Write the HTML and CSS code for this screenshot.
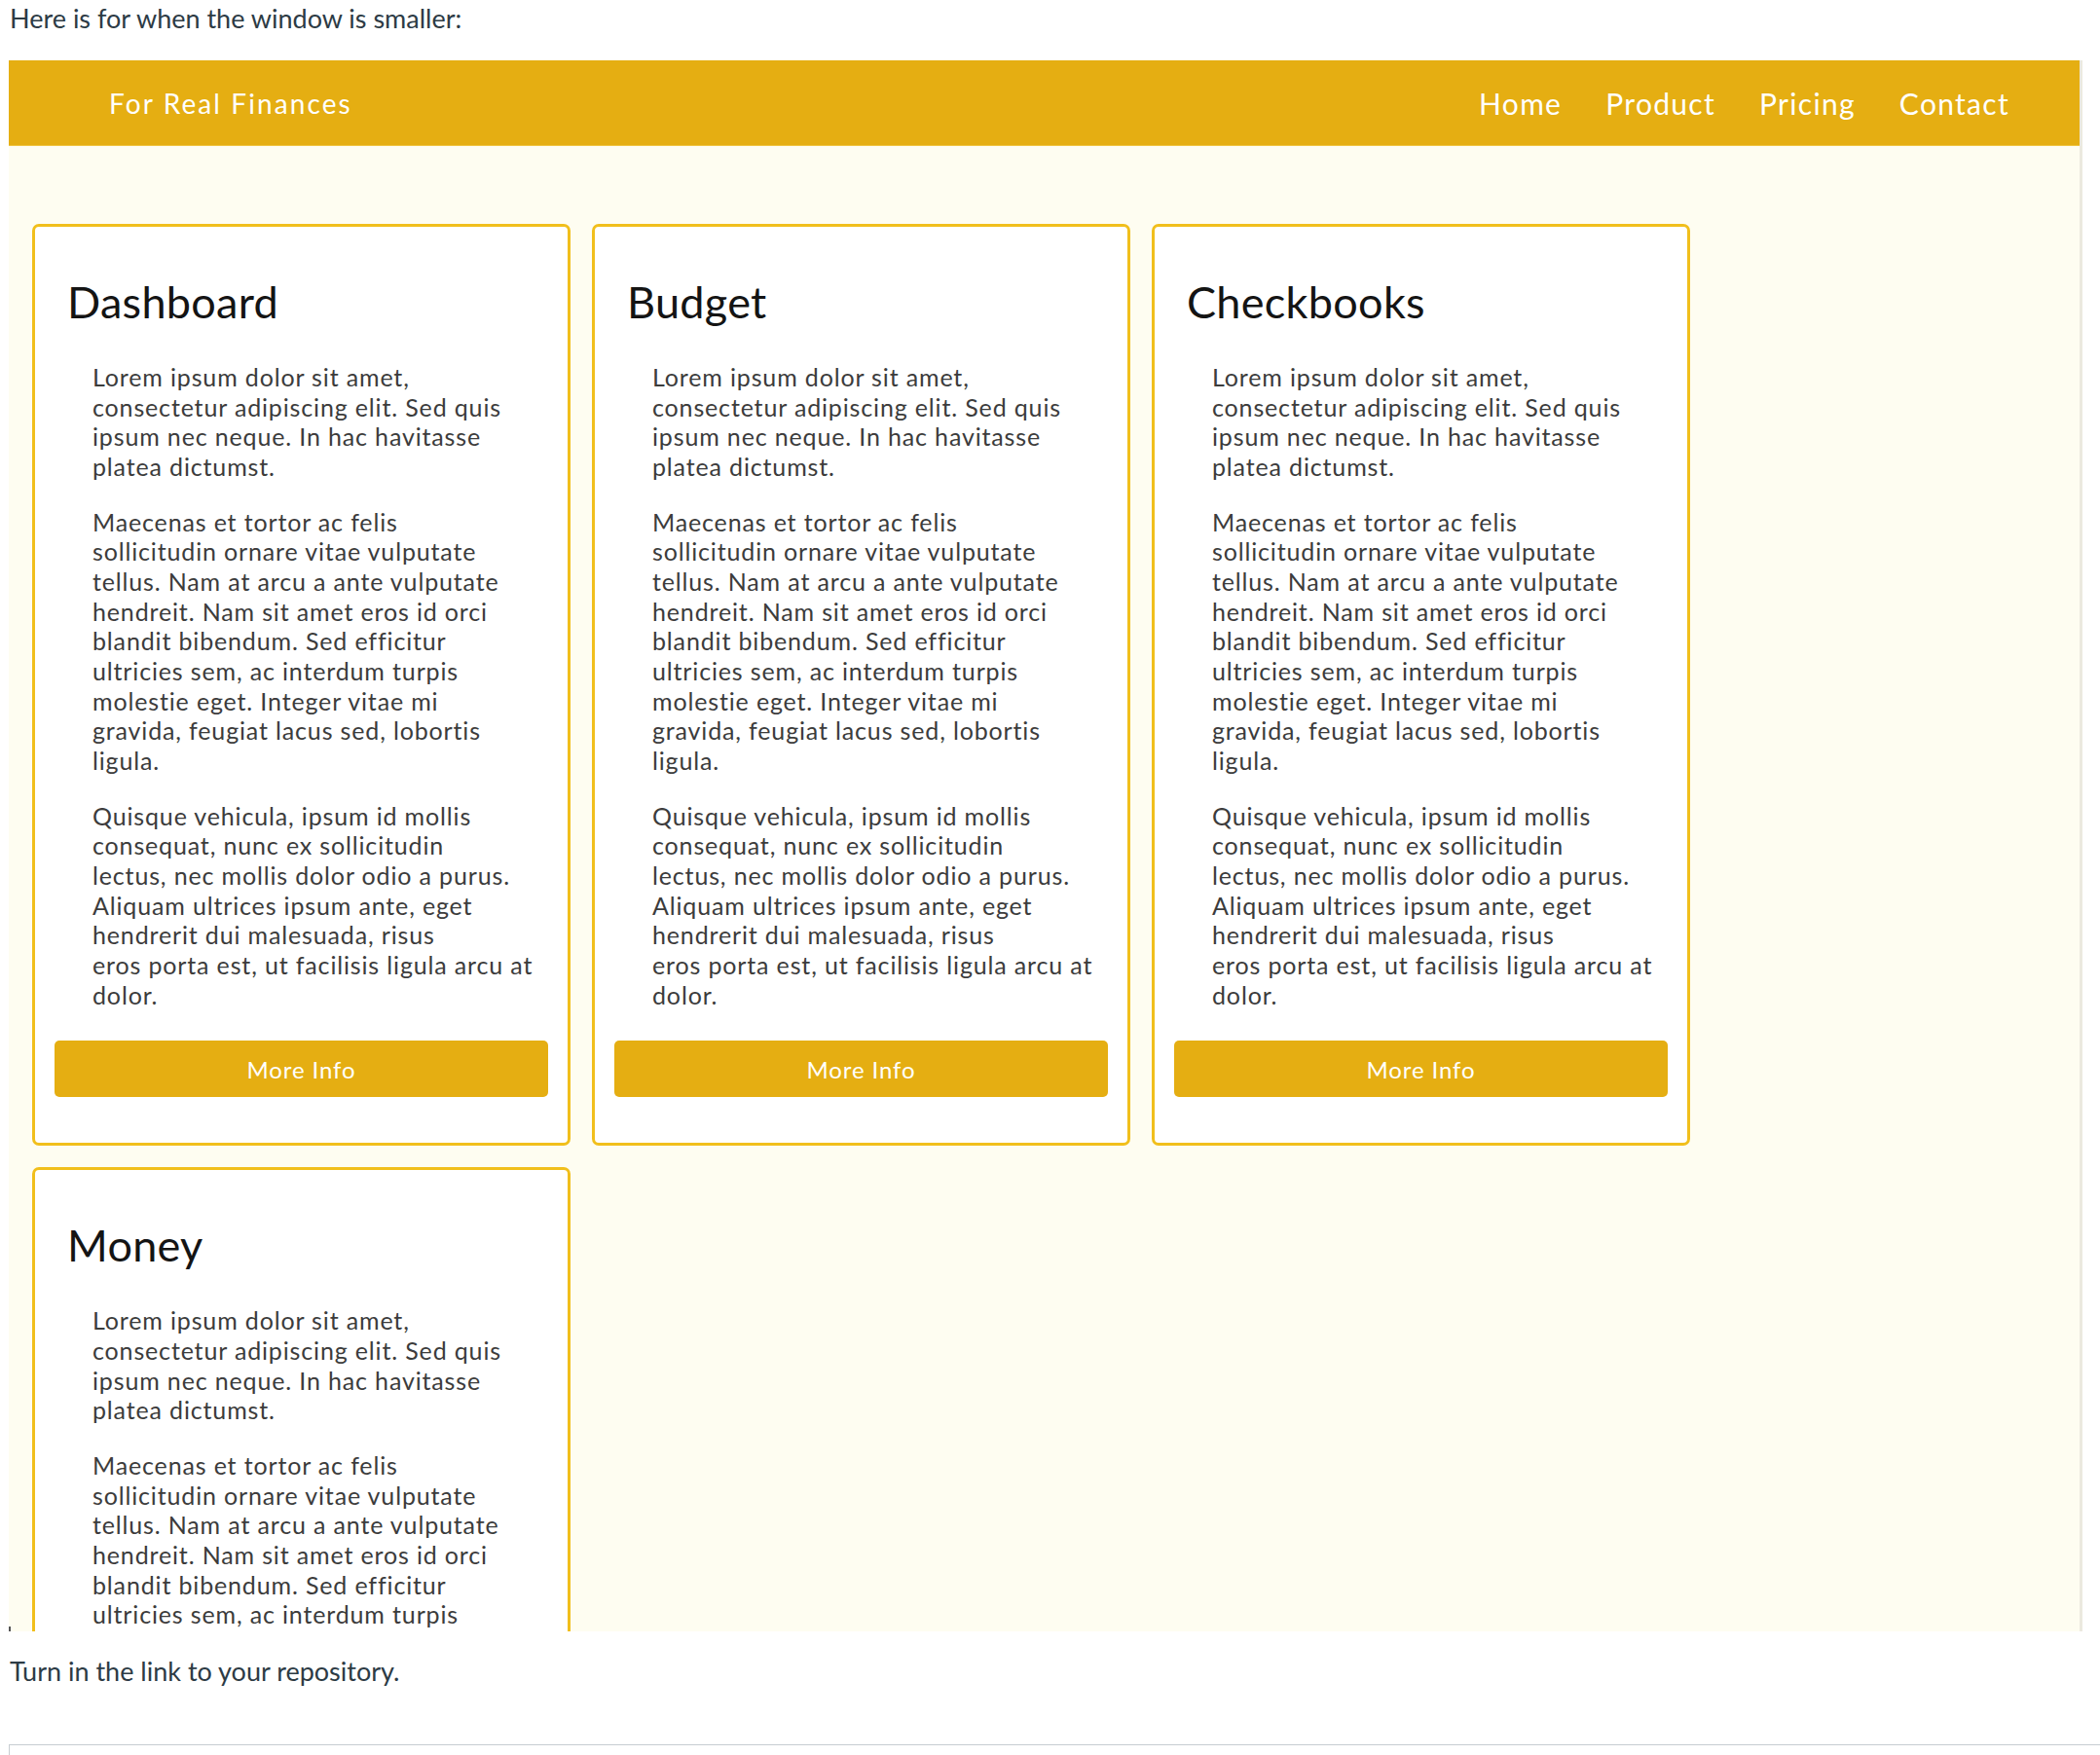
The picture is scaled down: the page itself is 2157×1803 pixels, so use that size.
FILE: index.html
```html
<!DOCTYPE html>
<html lang="en">
<head>
<meta charset="utf-8">
<title>Assignment</title>
<link rel="stylesheet" href="styles.css">
</head>
<body>
<p class="note">Here is for when the window is smaller:</p>

<div class="shot">
  <header class="site-header">
    <div class="brand">For Real Finances</div>
    <nav class="nav">
      <a class="nav-link">Home</a>
      <a class="nav-link">Product</a>
      <a class="nav-link">Pricing</a>
      <a class="nav-link">Contact</a>
    </nav>
  </header>

  <main class="cards">
    <section class="card">
      <h2 class="card-title">Dashboard</h2>
      <p class="card-text">Lorem ipsum dolor sit amet,<br>consectetur adipiscing elit. Sed quis<br>ipsum nec neque. In hac havitasse<br>platea dictumst.</p>
      <p class="card-text">Maecenas et tortor ac felis<br>sollicitudin ornare vitae vulputate<br>tellus. Nam at arcu a ante vulputate<br>hendreit. Nam sit amet eros id orci<br>blandit bibendum. Sed efficitur<br>ultricies sem, ac interdum turpis<br>molestie eget. Integer vitae mi<br>gravida, feugiat lacus sed, lobortis<br>ligula.</p>
      <p class="card-text">Quisque vehicula, ipsum id mollis<br>consequat, nunc ex sollicitudin<br>lectus, nec mollis dolor odio a purus.<br>Aliquam ultrices ipsum ante, eget<br>hendrerit dui malesuada, risus<br>eros porta est, ut facilisis ligula arcu at<br>dolor.</p>
      <button class="card-btn">More Info</button>
    </section>

    <section class="card">
      <h2 class="card-title">Budget</h2>
      <p class="card-text">Lorem ipsum dolor sit amet,<br>consectetur adipiscing elit. Sed quis<br>ipsum nec neque. In hac havitasse<br>platea dictumst.</p>
      <p class="card-text">Maecenas et tortor ac felis<br>sollicitudin ornare vitae vulputate<br>tellus. Nam at arcu a ante vulputate<br>hendreit. Nam sit amet eros id orci<br>blandit bibendum. Sed efficitur<br>ultricies sem, ac interdum turpis<br>molestie eget. Integer vitae mi<br>gravida, feugiat lacus sed, lobortis<br>ligula.</p>
      <p class="card-text">Quisque vehicula, ipsum id mollis<br>consequat, nunc ex sollicitudin<br>lectus, nec mollis dolor odio a purus.<br>Aliquam ultrices ipsum ante, eget<br>hendrerit dui malesuada, risus<br>eros porta est, ut facilisis ligula arcu at<br>dolor.</p>
      <button class="card-btn">More Info</button>
    </section>

    <section class="card">
      <h2 class="card-title">Checkbooks</h2>
      <p class="card-text">Lorem ipsum dolor sit amet,<br>consectetur adipiscing elit. Sed quis<br>ipsum nec neque. In hac havitasse<br>platea dictumst.</p>
      <p class="card-text">Maecenas et tortor ac felis<br>sollicitudin ornare vitae vulputate<br>tellus. Nam at arcu a ante vulputate<br>hendreit. Nam sit amet eros id orci<br>blandit bibendum. Sed efficitur<br>ultricies sem, ac interdum turpis<br>molestie eget. Integer vitae mi<br>gravida, feugiat lacus sed, lobortis<br>ligula.</p>
      <p class="card-text">Quisque vehicula, ipsum id mollis<br>consequat, nunc ex sollicitudin<br>lectus, nec mollis dolor odio a purus.<br>Aliquam ultrices ipsum ante, eget<br>hendrerit dui malesuada, risus<br>eros porta est, ut facilisis ligula arcu at<br>dolor.</p>
      <button class="card-btn">More Info</button>
    </section>

    <section class="card">
      <h2 class="card-title">Money</h2>
      <p class="card-text">Lorem ipsum dolor sit amet,<br>consectetur adipiscing elit. Sed quis<br>ipsum nec neque. In hac havitasse<br>platea dictumst.</p>
      <p class="card-text">Maecenas et tortor ac felis<br>sollicitudin ornare vitae vulputate<br>tellus. Nam at arcu a ante vulputate<br>hendreit. Nam sit amet eros id orci<br>blandit bibendum. Sed efficitur<br>ultricies sem, ac interdum turpis<br>molestie eget. Integer vitae mi<br>gravida, feugiat lacus sed, lobortis<br>ligula.</p>
      <p class="card-text">Quisque vehicula, ipsum id mollis<br>consequat, nunc ex sollicitudin<br>lectus, nec mollis dolor odio a purus.<br>Aliquam ultrices ipsum ante, eget<br>hendrerit dui malesuada, risus<br>eros porta est, ut facilisis ligula arcu at<br>dolor.</p>
      <button class="card-btn">More Info</button>
    </section>
  </main>
  <span class="speck"></span>
</div>

<p class="note note-after">Turn in the link to your repository.</p>

<div class="submit-box"></div>
</body>
</html>
```

FILE: styles.css
```css
html {
  overflow: hidden;
}

body {
  margin: 0;
  background: #ffffff;
  font-family: Lato, "Liberation Sans", sans-serif;
  color: #2d3b45;
}

.note {
  margin: 1px 0 0 10px;
  font-size: 27px;
  line-height: 36px;
}

.shot {
  position: relative;
  margin: 25px 0 0 9px;
  width: 2127px;
  height: 1614px;
  overflow: hidden;
  background: #fefdf1;
  border-right: 3px solid #ebe9df;
}

.site-header {
  display: flex;
  align-items: center;
  justify-content: space-between;
  height: 87px;
  border-bottom: 1px solid #efc33f;
  background: #e5ae12;
  padding: 0 72px 0 103px;
  color: #ffffff;
}

.brand {
  font-size: 28px;
  letter-spacing: 2.1px;
}

.nav {
  display: flex;
  gap: 45px;
}

.nav-link {
  font-size: 30px;
  letter-spacing: 1.3px;
  color: #ffffff;
}

.cards {
  display: flex;
  flex-wrap: wrap;
  gap: 22px;
  padding: 80px 0 0 24px;
}

.card {
  box-sizing: border-box;
  width: 553px;
  background: #ffffff;
  border: 3px solid #f1bf1c;
  border-radius: 7px;
  padding: 20px 20px 47px;
}

.card-title {
  margin: 31px 0 36px 13px;
  font-size: 45px;
  line-height: 52px;
  font-weight: 400;
  letter-spacing: 0.3px;
  color: #141414;
}

.card-text {
  margin: 0 0 26px 39px;
  font-size: 25px;
  line-height: 30.67px;
  letter-spacing: 0.85px;
  color: #3c3c3c;
  white-space: nowrap;
}

.card-text:last-of-type {
  margin-bottom: 0;
}

.card-btn {
  display: block;
  width: 100%;
  height: 58px;
  margin-top: 32px;
  border: none;
  border-radius: 5px;
  background: #e5ae12;
  color: #ffffff;
  font-family: Lato, "Liberation Sans", sans-serif;
  font-size: 24px;
  letter-spacing: 0.9px;
}

.speck {
  position: absolute;
  left: 0;
  bottom: 0;
  width: 2px;
  height: 5px;
  background: #555555;
}

.note-after {
  margin-top: 23px;
}

.submit-box {
  margin: 57px 0 0 9px;
  width: calc(100% + 100px);
  height: 60px;
  border-top: 1px solid #c7cdd1;
  border-left: 1px solid #c7cdd1;
}
```
